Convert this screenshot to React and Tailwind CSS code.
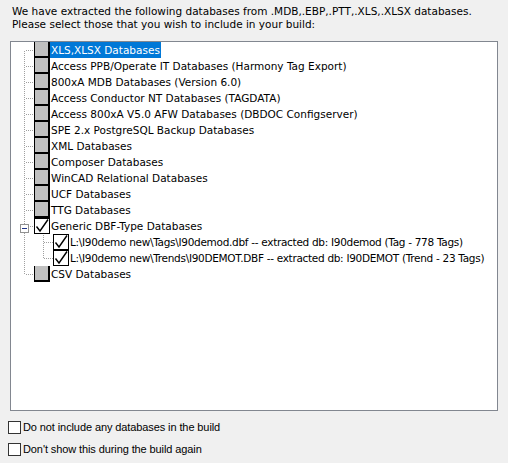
const DOT = "#a0a0a0";

function vdots(x, y0, y1) {
  const out = [];
  for (let y = y0; y < y1; y++) {
    if (y % 2 === 1) out.push(<rect key={"v" + x + "-" + y} x={x} y={y} width="1" height="1" fill={DOT} />);
  }
  return out;
}
function hdots(y, x0, x1) {
  const out = [];
  for (let x = x0; x < x1; x++) {
    if (x % 2 === 1) out.push(<rect key={"h" + y + "-" + x} x={x} y={y} width="1" height="1" fill={DOT} />);
  }
  return out;
}

function Connector({ kind }) {
  if (kind === "child" || kind === "childLast") {
    return (
      <svg width="42" height="16" className="shrink-0 block">
        {vdots(13, 0, 16)}
        {vdots(32, 0, kind === "childLast" ? 9 : 16)}
        {hdots(8, 33, 42)}
      </svg>
    );
  }
  const y0 = kind === "first" ? 8 : 0;
  const y1 = kind === "last" ? 9 : 16;
  return (
    <svg width="23" height="16" className="shrink-0 block">
      {vdots(13, y0, y1)}
      {hdots(8, 14, 23)}
      {kind === "expander" && (
        <g>
          <rect x="9.5" y="6.5" width="8" height="8" fill="#fff" stroke="#919191" strokeWidth="1" />
          <rect x="11" y="10" width="5" height="1" fill="#1e3287" />
        </g>
      )}
    </svg>
  );
}

function GrayBox() {
  return <div className="shrink-0 w-[16px] h-[16px] border-l border-r-2 border-b-2 border-black bg-[#c0c0c0]" />;
}

function CheckedBox() {
  return (
    <div className="shrink-0 w-[16px] h-[16px] border border-black bg-white flex items-center justify-center">
      <svg width="14" height="14" viewBox="0 0 14 14" className="block">
        <path d="M1.5 7.5 L5 12 L13 0.5" fill="none" stroke="#000" strokeWidth="1.4" />
      </svg>
    </div>
  );
}

function Row({ kind, checked, label, selected }) {
  const child = kind === "child" || kind === "childLast";
  return (
    <div className="flex h-[16px] items-stretch">
      <Connector kind={kind} />
      {checked ? <CheckedBox /> : <GrayBox />}
      <span
        className={
          "whitespace-nowrap leading-[16px] px-[1px] " +
          (child ? "tracking-[-0.3px] " : "") +
          (selected ? "bg-[#0078d7] text-white" : "text-black")
        }
      >
        {label}
      </span>
    </div>
  );
}

export default function App() {
  const items = [
    ["first", false, "XLS,XLSX Databases", true],
    ["mid", false, "Access PPB/Operate IT Databases (Harmony Tag Export)"],
    ["mid", false, "800xA MDB Databases (Version 6.0)"],
    ["mid", false, "Access Conductor NT Databases (TAGDATA)"],
    ["mid", false, "Access 800xA V5.0 AFW Databases (DBDOC Configserver)"],
    ["mid", false, "SPE 2.x PostgreSQL Backup Databases"],
    ["mid", false, "XML Databases"],
    ["mid", false, "Composer Databases"],
    ["mid", false, "WinCAD Relational Databases"],
    ["mid", false, "UCF Databases"],
    ["mid", false, "TTG Databases"],
    ["expander", true, "Generic DBF-Type Databases"],
    ["child", true, "L:\\I90demo new\\Tags\\I90demod.dbf -- extracted db: I90demod (Tag - 778 Tags)"],
    ["childLast", true, "L:\\I90demo new\\Trends\\I90DEMOT.DBF -- extracted db: I90DEMOT (Trend - 23 Tags)"],
    ["last", false, "CSV Databases"],
  ];
  return (
    <div
      className="w-[508px] h-[463px] bg-[#f0f0f0] text-black overflow-hidden"
      style={{ fontFamily: "'DejaVu Sans', sans-serif", fontSize: "10.5px" }}
    >
      <div className="pt-[5px] pl-[12px] leading-[13px]">
        <div>We have extracted the following databases from .MDB,.EBP,.PTT,.XLS,.XLSX databases.</div>
        <div>Please select those that you wish to include in your build:</div>
      </div>
      <div className="ml-[10px] mt-[10px] w-[488px] h-[370px] border border-[#828790] bg-white">
        {items.map(([kind, checked, label, selected], i) => (
          <Row key={i} kind={kind} checked={checked} label={label} selected={selected} />
        ))}
      </div>
      <div
        className="mt-[5px] pl-[8px] tracking-[-0.1px]"
        style={{ fontFamily: "'Liberation Sans', sans-serif", fontSize: "11px" }}
      >
        <div className="flex h-[22px] items-center gap-[2px]">
          <div className="w-[13px] h-[13px] border border-[#333333] bg-white" />
          <span className="whitespace-nowrap">Do not include any databases in the build</span>
        </div>
        <div className="flex h-[22px] items-center gap-[2px]">
          <div className="w-[13px] h-[13px] border border-[#333333] bg-white" />
          <span className="whitespace-nowrap">Don't show this during the build again</span>
        </div>
      </div>
    </div>
  );
}
